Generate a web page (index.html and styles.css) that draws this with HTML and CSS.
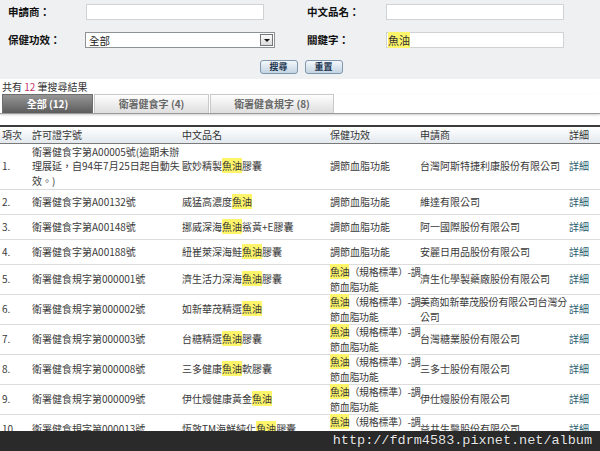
FILE: index.html
```html
<!DOCTYPE html>
<html lang="zh-Hant">
<head>
<meta charset="utf-8">
<title>健康食品查詢</title>
<link rel="stylesheet" href="styles.css">
</head>
<body>
<div class="page">
  <div class="search">
    <div class="form-grid">
      <span class="label">申請商：</span>
      <div class="field"></div>
      <span class="label">中文品名：</span>
      <div class="field"></div>
      <span class="label">保健功效：</span>
      <div class="select"><span>全部</span><span class="arrow"></span></div>
      <span class="label">關鍵字：</span>
      <div class="field"><mark>魚油</mark></div>
    </div>
    <div class="buttons">
      <button class="btn">搜尋</button>
      <button class="btn">重置</button>
    </div>
  </div>

  <div class="count">共有 <em>12</em> 筆搜尋結果</div>

  <div class="tabs">
    <div class="tab active t1">全部 (12)</div>
    <div class="tab t2">衛署健食字 (4)</div>
    <div class="tab t3">衛署健食規字 (8)</div>
  </div>

  <table class="results">
    <colgroup>
      <col class="c1"><col class="c2"><col class="c3"><col class="c4"><col class="c5"><col class="c6">
    </colgroup>
    <thead>
      <tr><th>項次</th><th>許可證字號</th><th>中文品名</th><th>保健功效</th><th>申請商</th><th>詳細</th></tr>
    </thead>
    <tbody>
      <tr class="r3">
        <td>1.</td>
        <td>衛署健食字第A00005號(逾期未辦<br>理展延，自94年7月25日起自動失<br>效。)</td>
        <td>歐妙精製<mark>魚油</mark>膠囊</td>
        <td>調節血脂功能</td>
        <td>台灣阿斯特捷利康股份有限公司</td>
        <td><a href="#">詳細</a></td>
      </tr>
      <tr class="r1">
        <td>2.</td><td>衛署健食字第A00132號</td><td>威猛高濃度<mark>魚油</mark></td><td>調節血脂功能</td><td>維達有限公司</td><td><a href="#">詳細</a></td>
      </tr>
      <tr class="r1">
        <td>3.</td><td>衛署健食字第A00148號</td><td>挪威深海<mark>魚油</mark>鯊黃+E膠囊</td><td>調節血脂功能</td><td>阿一國際股份有限公司</td><td><a href="#">詳細</a></td>
      </tr>
      <tr class="r1">
        <td>4.</td><td>衛署健食字第A00188號</td><td>紐崔萊深海鮭<mark>魚油</mark>膠囊</td><td>調節血脂功能</td><td>安麗日用品股份有限公司</td><td><a href="#">詳細</a></td>
      </tr>
      <tr class="r2">
        <td>5.</td><td>衛署健食規字第000001號</td><td>濟生活力深海<mark>魚油</mark>膠囊</td><td class="fx"><mark>魚油</mark>（規格標準）-調<br>節血脂功能</td><td>濟生化學製藥廠股份有限公司</td><td><a href="#">詳細</a></td>
      </tr>
      <tr class="r2">
        <td>6.</td><td>衛署健食規字第000002號</td><td>如新華茂精選<mark>魚油</mark></td><td class="fx"><mark>魚油</mark>（規格標準）-調<br>節血脂功能</td><td class="tight">美商如新華茂股份有限公司台灣分<br>公司</td><td><a href="#">詳細</a></td>
      </tr>
      <tr class="r2">
        <td>7.</td><td>衛署健食規字第000003號</td><td>台糖精選<mark>魚油</mark>膠囊</td><td class="fx"><mark>魚油</mark>（規格標準）-調<br>節血脂功能</td><td>台灣糖業股份有限公司</td><td><a href="#">詳細</a></td>
      </tr>
      <tr class="r2">
        <td>8.</td><td>衛署健食規字第000008號</td><td>三多健康<mark>魚油</mark>軟膠囊</td><td class="fx"><mark>魚油</mark>（規格標準）-調<br>節血脂功能</td><td>三多士股份有限公司</td><td><a href="#">詳細</a></td>
      </tr>
      <tr class="r2">
        <td>9.</td><td>衛署健食規字第000009號</td><td>伊仕嫚健康黃金<mark>魚油</mark></td><td class="fx"><mark>魚油</mark>（規格標準）-調<br>節血脂功能</td><td>伊仕嫚股份有限公司</td><td><a href="#">詳細</a></td>
      </tr>
      <tr class="r2">
        <td>10.</td><td>衛署健食規字第000013號</td><td>恆敦TM海鮮純化<mark>魚油</mark>膠囊</td><td class="fx"><mark>魚油</mark>（規格標準）-調<br>節血脂功能</td><td>益井生醫股份有限公司</td><td><a href="#">詳細</a></td>
      </tr>
    </tbody>
  </table>

  <div class="watermark">http://fdrm4583.pixnet.net/album</div>
</div>
</body>
</html>
```

FILE: styles.css
```css
* { box-sizing: border-box; }

html, body {
  margin: 0;
  padding: 0;
  background: #fff;
}

body {
  font-family: "Liberation Sans Narrow", "Noto Sans CJK TC", sans-serif;
  font-size: 10px;
  color: #333;
}

.page {
  position: relative;
  width: 600px;
  height: 451px;
  overflow: hidden;
}

/* search panel */
.search {
  background: #eef0f2;
  padding: 4px 0 5px 0;
}

.form-grid {
  display: grid;
  grid-template-columns: 77px 222px 78px 177px;
  grid-auto-rows: 16px;
  row-gap: 12px;
  padding-left: 8px;
  align-items: center;
}

.label {
  font-weight: bold;
  color: #111;
  font-size: 10.5px;
  line-height: 16px;
}

.field {
  width: 178px;
  height: 16px;
  margin-left: 1px;
  background: #fff;
  border: 1px solid #cfd3d6;
  line-height: 14px;
  padding-left: 1px;
}

.field mark {
  font-size: 11px;
}

.select {
  width: 190px;
  height: 16px;
  background: #fff;
  border: 1px solid #8d9296;
  display: flex;
  align-items: center;
  justify-content: space-between;
  padding-left: 3px;
  padding-right: 1px;
  font-size: 10.5px;
  color: #222;
}

.arrow {
  width: 13px;
  height: 12px;
  border: 1px solid #777;
  background: linear-gradient(#fafafa, #dcdcdc);
  position: relative;
}

.arrow::after {
  content: "";
  position: absolute;
  left: 3px;
  top: 4px;
  border-left: 3px solid transparent;
  border-right: 3px solid transparent;
  border-top: 3px solid #111;
}

.buttons {
  display: flex;
  justify-content: center;
  gap: 7px;
  margin-top: 12px;
  padding-left: 2px;
}

.btn {
  width: 38px;
  height: 14px;
  padding: 0;
  margin: 0;
  border: 1px solid #7e97ad;
  border-radius: 3px;
  background: linear-gradient(#f3f7fb, #c4d4e2);
  font-family: "Noto Sans CJK TC", sans-serif;
  font-size: 9px;
  font-weight: bold;
  line-height: 12px;
  color: #1b3550;
}

/* count */
.count {
  height: 15px;
  line-height: 15px;
  padding-left: 2px;
  color: #333;
}

.count em {
  font-style: normal;
  color: #c8336a;
}

/* tabs */
.tabs {
  display: flex;
  padding-left: 2px;
  border-bottom: 1px solid #9a9a9a;
  box-shadow: 0 1px 2px #cfcfcf;
  height: 20px;
}

.tab {
  height: 19px;
  line-height: 18px;
  text-align: center;
  font-weight: bold;
  color: #666;
  border: 1px solid #c9c9c9;
  border-bottom: none;
  background: linear-gradient(#fefefe, #dedede);
  margin-right: 1px;
}

.tab.active {
  color: #fff;
  border-color: #6f6f6f;
  background: linear-gradient(#969696, #5c5c5c);
}

.t1 { width: 91px; }
.t2 { width: 115px; }
.t3 { width: 124px; }

/* results table */
.results {
  width: 600px;
  margin-top: 11px;
  border-collapse: collapse;
  table-layout: fixed;
}

.c1 { width: 30px; }
.c2 { width: 150px; }
.c3 { width: 148px; }
.c4 { width: 90px; }
.c5 { width: 149px; }
.c6 { width: 33px; }

.results th {
  text-align: left;
  font-weight: normal;
  color: #333;
  height: 16px;
  padding: 0 2px;
  line-height: 16px;
  border-top: 2px solid #3c3c3c;
  border-bottom: 1px solid #7a7a7a;
  background: linear-gradient(#ffffff, #e3e9ee);
}

.results td {
  padding: 0 2px;
  line-height: 14.5px;
  vertical-align: middle;
  white-space: nowrap;
  border-bottom: 1px solid #dcdcdc;
  color: #3a3a3a;
}

.results td.fx {
  letter-spacing: -0.3px;
}

.results td.tight {
  letter-spacing: -0.2px;
}

.r3 td { height: 46px; }
.r1 td { height: 25px; }
.r2 td { height: 29px; }

mark {
  background: #fff56a;
  color: inherit;
}

.results a {
  color: #1f5c6e;
  text-decoration: none;
}

/* watermark overlay */
.watermark {
  position: absolute;
  left: 0;
  top: 431px;
  width: 600px;
  height: 20px;
  background: #2a2a2a;
  color: #e8e8e8;
  font-family: "Liberation Mono", monospace;
  font-size: 13.5px;
  line-height: 20px;
  text-align: right;
  padding-right: 8px;
  text-shadow: 0 0 1px #000;
}
```
